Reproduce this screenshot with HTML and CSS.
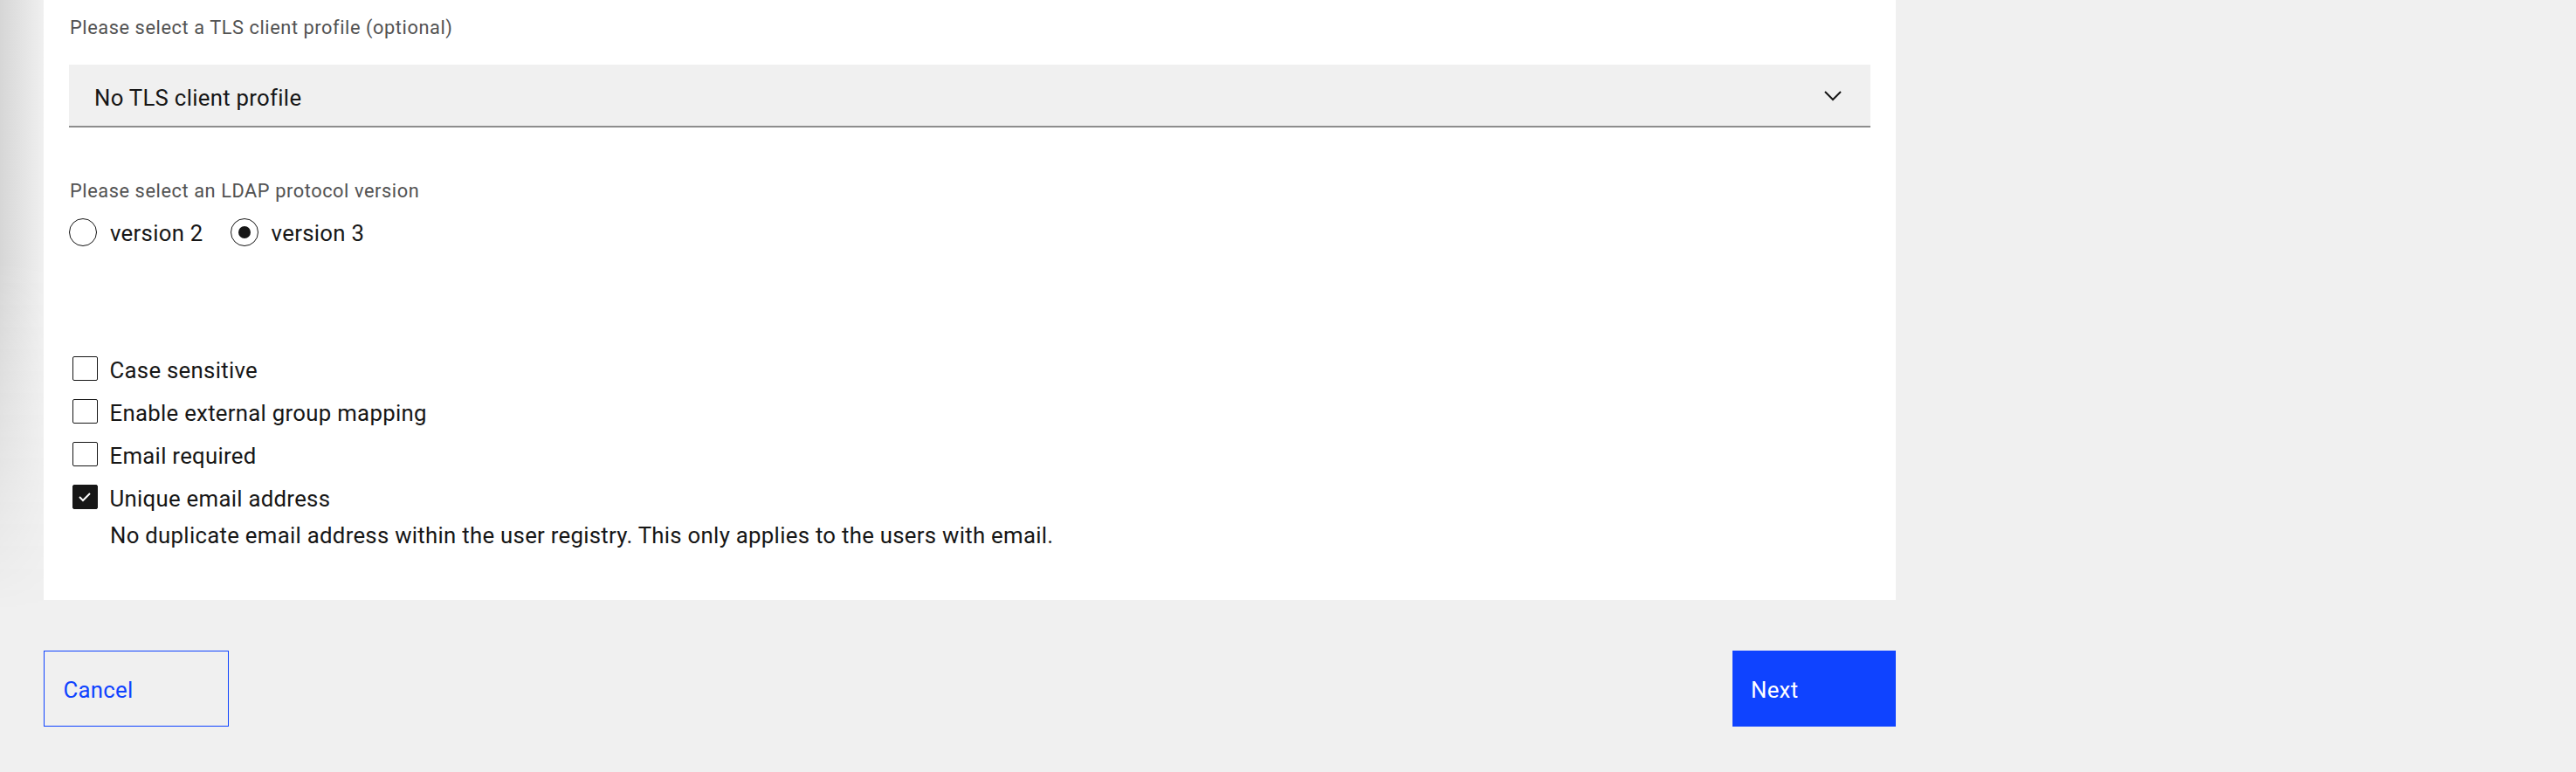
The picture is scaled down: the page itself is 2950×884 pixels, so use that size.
FILE: index.html
```html
<!DOCTYPE html>
<html>
<head>
<meta charset="utf-8">
<link rel="stylesheet" href="styles.css">
</head>
<body>
<div class="page">
  <div class="side-shadow"></div>
  <main class="main">
    <section class="card">
      <div class="field first">
        <label class="label">Please select a TLS client profile (optional)</label>
        <div class="select">
          <span class="select-text">No TLS client profile</span>
          <svg class="chevron" width="20" height="12" viewBox="0 0 20 12"><polyline points="1,1 10,10 19,1" fill="none" stroke="#161616" stroke-width="2"/></svg>
        </div>
      </div>
      <div class="field radios-field">
        <label class="label">Please select an LDAP protocol version</label>
        <div class="radio-row">
          <span class="radio-item"><span class="radio"></span><span class="opt">version 2</span></span>
          <span class="radio-item"><span class="radio checked"></span><span class="opt">version 3</span></span>
        </div>
      </div>
      <div class="checks">
        <div class="check-item"><span class="box"></span><span class="opt">Case sensitive</span></div>
        <div class="check-item"><span class="box"></span><span class="opt">Enable external group mapping</span></div>
        <div class="check-item"><span class="box"></span><span class="opt">Email required</span></div>
        <div class="check-item"><span class="box checked"><svg width="16" height="12" viewBox="0 0 16 12"><polyline points="2,6 6,10 14,2" fill="none" stroke="#fff" stroke-width="2"/></svg></span><span class="opt">Unique email address</span></div>
        <p class="desc">No duplicate email address within the user registry. This only applies to the users with email.</p>
      </div>
    </section>
    <div class="actions">
      <button class="btn btn-secondary">Cancel</button>
      <button class="btn btn-primary">Next</button>
    </div>
  </main>
</div>
</body>
</html>
```
FILE: styles.css
```css
* { box-sizing: border-box; }
body {
  margin: 0;
  background: #f0f0f0;
  font-family: Roboto, "Liberation Sans", sans-serif;
  color: #161616;
}
.page { display: flex; min-height: 884px; }
.side-shadow {
  width: 50px;
  flex: none;
  background: linear-gradient(to right, #d6d6d6, #f0f0f0);
  -webkit-mask-image: linear-gradient(to bottom, #000 0, #000 300px, transparent 700px);
  mask-image: linear-gradient(to bottom, #000 0, #000 300px, transparent 700px);
}
.main { width: 2121px; flex: none; }
.card { background: #fff; padding: 0 29px 0 29px; height: 687px; }
.label {
  display: block;
  font-size: 21.77px;
  line-height: 28.8px;
  letter-spacing: 0.576px;
  color: #525252;
  padding-left: 1px;
}
.first .label { padding-top: 17.5px; }
.select {
  margin-top: 27.7px;
  height: 72px;
  background: #f0f0f0;
  border-bottom: 2px solid #8d8d8d;
  display: flex;
  align-items: center;
  justify-content: space-between;
  padding: 0 33px 0 29px;
}
.select-text { font-size: 25.75px; letter-spacing: 0.288px; padding-top: 6px; }
.chevron { margin-top: 3px; }
.radios-field { margin-top: 59px; }
.radio-row { display: flex; gap: 31px; margin-top: 15.2px; }
.radio-item { display: flex; align-items: center; gap: 15px; }
.radio {
  width: 32px; height: 32px; border-radius: 50%;
  border: 1.8px solid #161616;
  display: flex; align-items: center; justify-content: center;
}
.radio.checked::after {
  content: ""; width: 14px; height: 14px; border-radius: 50%; background: #161616;
}
.opt { font-size: 25.75px; letter-spacing: 0.288px; line-height: 32px; }
.radio-item .opt { padding-top: 2.4px; }
.checks { margin-top: 124px; padding-left: 4px; }
.check-item { display: flex; align-items: center; gap: 14px; height: 29px; margin-bottom: 20px; }
.check-item .opt { padding-top: 5px; }
.box {
  width: 28.5px; height: 28.5px; border: 1.8px solid #161616; border-radius: 2px;
  display: flex; align-items: center; justify-content: center;
}
.box.checked { background: #161616; }
.desc { margin: -6px 0 0 43px; font-size: 25.75px; letter-spacing: 0.288px; line-height: 32px; }
.actions { display: flex; justify-content: space-between; margin-top: 58px; }
.btn {
  height: 87px; font-family: inherit; font-size: 25.75px; letter-spacing: 0.288px;
  text-align: left; padding: 3px 0 0 21px; cursor: pointer;
}
.btn-secondary { width: 212px; background: transparent; border: 1.8px solid #0f43ff; color: #0f43ff; padding-left: 21.5px; }
.btn-primary { width: 187px; background: #0f43ff; border: none; color: #fff; }
```
